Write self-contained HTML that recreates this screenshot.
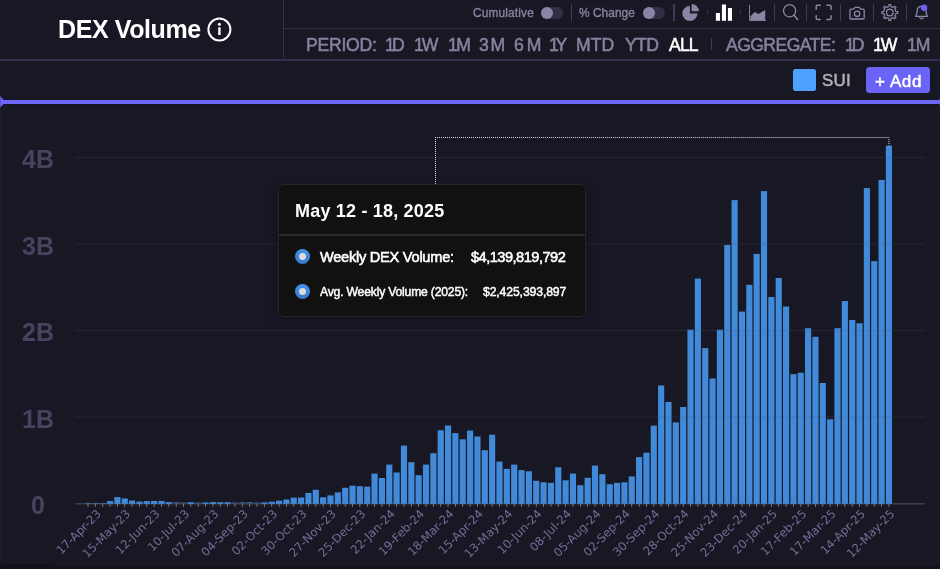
<!DOCTYPE html>
<html><head><meta charset="utf-8"><title>DEX Volume</title>
<style>
html,body{margin:0;padding:0}
body{width:940px;height:569px;background:#12121b;position:relative;overflow:hidden;font-family:"Liberation Sans",sans-serif}
.panel{position:absolute;left:0;top:0;width:940px;height:565px;background:#181825;border-radius:0 0 0 6px}
.edge{position:absolute;left:0;top:104px;width:1px;height:458px;background:#1c1c2a}
.t{position:absolute;white-space:nowrap;line-height:1;will-change:transform}
.hl{position:absolute;background:#312f49}
.sep{position:absolute;width:1.3px;background:#3d3b57}
.chart{position:absolute;left:0;top:0;will-change:transform}
.tog{position:absolute;height:12.1px;width:21.7px;border-radius:6.1px;background:#302f47}
.tog i{position:absolute;left:0;top:0;width:12.1px;height:12.1px;border-radius:50%;background:#8886a4}
.tip{position:absolute;left:278px;top:184px;width:308px;height:132.6px;background:#111111;border-radius:6px;box-sizing:border-box;border:1px solid #262626;box-shadow:0 2px 8px rgba(0,0,0,.35)}
.tipsep{position:absolute;left:279px;top:234.4px;width:306px;height:1.2px;background:#2a2a2a}
.dot{position:absolute;width:15.2px;height:15.2px;border-radius:50%;background:linear-gradient(#4596ec,#3578c8)}
.dot i{position:absolute;left:4.1px;top:4.2px;width:7px;height:7px;border-radius:50%;background:#dcdcdc}
</style></head><body>
<div class="panel" style="width:60px;height:564px"></div><div class="panel" style="left:52px;width:888px;height:566px;border-radius:0"></div>
<div class="edge"></div>
<!-- header lines -->
<div class="hl" style="left:0;top:59.2px;width:940px;height:1.5px"></div>
<div class="hl" style="left:283px;top:0;width:1.3px;height:60px"></div>
<div class="hl" style="left:283px;top:27.5px;width:657px;height:1.3px"></div>
<!-- purple slider -->
<div style="position:absolute;left:0;top:99.8px;width:940px;height:4.05px;background:#6b65f8;box-shadow:0 0 0 0.55px rgba(10,10,16,.6)"></div>
<svg class="chart" width="940" height="569" viewBox="0 0 940 569"><path d="M0 96.2 L0.9 96.9 L3.9 99.9 V103.8 L0.9 106.8 L0 107.5 Z" fill="#6b65f8"/><rect x="0" y="96.6" width="0.9" height="10.6" fill="#5752c4"/><path d="M940 98.7 L938.6 100 V103.7 L940 105 Z" fill="#6b65f8"/></svg>
<svg class="chart" width="940" height="569" viewBox="0 0 940 569">
<rect x="75" y="157.00" width="850" height="1.0" fill="#272639"/>
<rect x="75" y="243.50" width="850" height="1.0" fill="#272639"/>
<rect x="75" y="330.00" width="850" height="1.0" fill="#272639"/>
<rect x="75" y="416.50" width="850" height="1.0" fill="#272639"/>
<rect x="75.3" y="503.15" width="849.6" height="1.3" fill="#45444c"/>
<rect x="84.92" y="502.95" width="6.15" height="0.55" fill="#4189d9"/>
<rect x="92.27" y="502.95" width="6.15" height="0.55" fill="#4189d9"/>
<rect x="99.62" y="502.95" width="6.15" height="0.55" fill="#4189d9"/>
<rect x="106.97" y="501.10" width="6.15" height="2.80" fill="#4189d9"/>
<rect x="114.32" y="497.10" width="6.15" height="6.80" fill="#4189d9"/>
<rect x="121.67" y="498.50" width="6.15" height="5.40" fill="#4189d9"/>
<rect x="129.01" y="500.50" width="6.15" height="3.40" fill="#4189d9"/>
<rect x="136.36" y="501.60" width="6.15" height="2.30" fill="#4189d9"/>
<rect x="143.71" y="501.10" width="6.15" height="2.80" fill="#4189d9"/>
<rect x="151.06" y="500.90" width="6.15" height="3.00" fill="#4189d9"/>
<rect x="158.41" y="500.90" width="6.15" height="3.00" fill="#4189d9"/>
<rect x="165.75" y="502.10" width="6.15" height="1.80" fill="#4189d9"/>
<rect x="173.10" y="502.45" width="6.15" height="0.75" fill="#4189d9"/>
<rect x="180.45" y="502.65" width="6.15" height="0.55" fill="#4189d9"/>
<rect x="187.80" y="502.20" width="6.15" height="1.70" fill="#4189d9"/>
<rect x="195.15" y="502.65" width="6.15" height="0.55" fill="#4189d9"/>
<rect x="202.49" y="502.40" width="6.15" height="1.50" fill="#4189d9"/>
<rect x="209.84" y="502.10" width="6.15" height="1.80" fill="#4189d9"/>
<rect x="217.19" y="502.20" width="6.15" height="1.70" fill="#4189d9"/>
<rect x="224.54" y="502.20" width="6.15" height="1.70" fill="#4189d9"/>
<rect x="231.89" y="502.65" width="6.15" height="0.55" fill="#4189d9"/>
<rect x="239.23" y="502.45" width="6.15" height="0.75" fill="#4189d9"/>
<rect x="246.58" y="502.35" width="6.15" height="0.85" fill="#4189d9"/>
<rect x="253.93" y="502.65" width="6.15" height="0.55" fill="#4189d9"/>
<rect x="261.28" y="502.40" width="6.15" height="1.50" fill="#4189d9"/>
<rect x="268.62" y="501.70" width="6.15" height="2.20" fill="#4189d9"/>
<rect x="275.97" y="500.70" width="6.15" height="3.20" fill="#4189d9"/>
<rect x="283.32" y="499.50" width="6.15" height="4.40" fill="#4189d9"/>
<rect x="290.67" y="497.60" width="6.15" height="6.30" fill="#4189d9"/>
<rect x="298.02" y="497.50" width="6.15" height="6.40" fill="#4189d9"/>
<rect x="305.37" y="492.90" width="6.15" height="11.00" fill="#4189d9"/>
<rect x="312.71" y="489.80" width="6.15" height="14.10" fill="#4189d9"/>
<rect x="320.06" y="497.30" width="6.15" height="6.60" fill="#4189d9"/>
<rect x="327.41" y="495.40" width="6.15" height="8.50" fill="#4189d9"/>
<rect x="334.76" y="492.40" width="6.15" height="11.50" fill="#4189d9"/>
<rect x="342.11" y="487.80" width="6.15" height="16.10" fill="#4189d9"/>
<rect x="349.45" y="485.70" width="6.15" height="18.20" fill="#4189d9"/>
<rect x="356.80" y="486.20" width="6.15" height="17.70" fill="#4189d9"/>
<rect x="364.15" y="486.70" width="6.15" height="17.20" fill="#4189d9"/>
<rect x="371.50" y="473.60" width="6.15" height="30.30" fill="#4189d9"/>
<rect x="378.85" y="478.00" width="6.15" height="25.90" fill="#4189d9"/>
<rect x="386.19" y="464.60" width="6.15" height="39.30" fill="#4189d9"/>
<rect x="393.54" y="472.50" width="6.15" height="31.40" fill="#4189d9"/>
<rect x="400.89" y="445.60" width="6.15" height="58.30" fill="#4189d9"/>
<rect x="408.24" y="462.20" width="6.15" height="41.70" fill="#4189d9"/>
<rect x="415.58" y="475.20" width="6.15" height="28.70" fill="#4189d9"/>
<rect x="422.93" y="464.60" width="6.15" height="39.30" fill="#4189d9"/>
<rect x="430.28" y="453.20" width="6.15" height="50.70" fill="#4189d9"/>
<rect x="437.63" y="430.20" width="6.15" height="73.70" fill="#4189d9"/>
<rect x="444.98" y="425.50" width="6.15" height="78.40" fill="#4189d9"/>
<rect x="452.32" y="433.10" width="6.15" height="70.80" fill="#4189d9"/>
<rect x="459.67" y="439.30" width="6.15" height="64.60" fill="#4189d9"/>
<rect x="467.02" y="430.60" width="6.15" height="73.30" fill="#4189d9"/>
<rect x="474.37" y="436.50" width="6.15" height="67.40" fill="#4189d9"/>
<rect x="481.72" y="450.20" width="6.15" height="53.70" fill="#4189d9"/>
<rect x="489.06" y="434.70" width="6.15" height="69.20" fill="#4189d9"/>
<rect x="496.41" y="461.60" width="6.15" height="42.30" fill="#4189d9"/>
<rect x="503.76" y="468.90" width="6.15" height="35.00" fill="#4189d9"/>
<rect x="511.11" y="464.60" width="6.15" height="39.30" fill="#4189d9"/>
<rect x="518.46" y="470.10" width="6.15" height="33.80" fill="#4189d9"/>
<rect x="525.80" y="471.30" width="6.15" height="32.60" fill="#4189d9"/>
<rect x="533.15" y="480.80" width="6.15" height="23.10" fill="#4189d9"/>
<rect x="540.50" y="482.30" width="6.15" height="21.60" fill="#4189d9"/>
<rect x="547.85" y="482.80" width="6.15" height="21.10" fill="#4189d9"/>
<rect x="555.20" y="467.20" width="6.15" height="36.70" fill="#4189d9"/>
<rect x="562.54" y="480.30" width="6.15" height="23.60" fill="#4189d9"/>
<rect x="569.89" y="473.60" width="6.15" height="30.30" fill="#4189d9"/>
<rect x="577.24" y="485.20" width="6.15" height="18.70" fill="#4189d9"/>
<rect x="584.59" y="477.70" width="6.15" height="26.20" fill="#4189d9"/>
<rect x="591.94" y="465.60" width="6.15" height="38.30" fill="#4189d9"/>
<rect x="599.28" y="474.20" width="6.15" height="29.70" fill="#4189d9"/>
<rect x="606.63" y="484.20" width="6.15" height="19.70" fill="#4189d9"/>
<rect x="613.98" y="482.80" width="6.15" height="21.10" fill="#4189d9"/>
<rect x="621.33" y="482.30" width="6.15" height="21.60" fill="#4189d9"/>
<rect x="628.68" y="476.40" width="6.15" height="27.50" fill="#4189d9"/>
<rect x="636.02" y="457.10" width="6.15" height="46.80" fill="#4189d9"/>
<rect x="643.37" y="452.70" width="6.15" height="51.20" fill="#4189d9"/>
<rect x="650.72" y="425.60" width="6.15" height="78.30" fill="#4189d9"/>
<rect x="658.07" y="385.40" width="6.15" height="118.50" fill="#4189d9"/>
<rect x="665.42" y="402.00" width="6.15" height="101.90" fill="#4189d9"/>
<rect x="672.76" y="422.40" width="6.15" height="81.50" fill="#4189d9"/>
<rect x="680.11" y="407.00" width="6.15" height="96.90" fill="#4189d9"/>
<rect x="687.46" y="329.70" width="6.15" height="174.20" fill="#4189d9"/>
<rect x="694.81" y="278.60" width="6.15" height="225.30" fill="#4189d9"/>
<rect x="702.16" y="348.10" width="6.15" height="155.80" fill="#4189d9"/>
<rect x="709.50" y="378.50" width="6.15" height="125.40" fill="#4189d9"/>
<rect x="716.85" y="329.70" width="6.15" height="174.20" fill="#4189d9"/>
<rect x="724.20" y="245.00" width="6.15" height="258.90" fill="#4189d9"/>
<rect x="731.55" y="200.10" width="6.15" height="303.80" fill="#4189d9"/>
<rect x="738.90" y="311.60" width="6.15" height="192.30" fill="#4189d9"/>
<rect x="746.24" y="284.80" width="6.15" height="219.10" fill="#4189d9"/>
<rect x="753.59" y="253.90" width="6.15" height="250.00" fill="#4189d9"/>
<rect x="760.94" y="191.10" width="6.15" height="312.80" fill="#4189d9"/>
<rect x="768.29" y="297.00" width="6.15" height="206.90" fill="#4189d9"/>
<rect x="775.64" y="278.00" width="6.15" height="225.90" fill="#4189d9"/>
<rect x="782.98" y="306.50" width="6.15" height="197.40" fill="#4189d9"/>
<rect x="790.33" y="374.10" width="6.15" height="129.80" fill="#4189d9"/>
<rect x="797.68" y="372.80" width="6.15" height="131.10" fill="#4189d9"/>
<rect x="805.03" y="328.20" width="6.15" height="175.70" fill="#4189d9"/>
<rect x="812.38" y="336.80" width="6.15" height="167.10" fill="#4189d9"/>
<rect x="819.72" y="383.00" width="6.15" height="120.90" fill="#4189d9"/>
<rect x="827.07" y="419.30" width="6.15" height="84.60" fill="#4189d9"/>
<rect x="834.42" y="328.20" width="6.15" height="175.70" fill="#4189d9"/>
<rect x="841.77" y="301.10" width="6.15" height="202.80" fill="#4189d9"/>
<rect x="849.12" y="320.00" width="6.15" height="183.90" fill="#4189d9"/>
<rect x="856.46" y="323.30" width="6.15" height="180.60" fill="#4189d9"/>
<rect x="863.81" y="188.10" width="6.15" height="315.80" fill="#4189d9"/>
<rect x="871.16" y="261.10" width="6.15" height="242.80" fill="#4189d9"/>
<rect x="878.51" y="179.90" width="6.15" height="324.00" fill="#4189d9"/>
<rect x="885.86" y="145.70" width="6.15" height="358.20" fill="#4189d9"/>
<rect x="75.3" y="157.00" width="849.6" height="1.0" fill="#272639" opacity="0.12"/>
<rect x="75.3" y="243.50" width="849.6" height="1.0" fill="#272639" opacity="0.12"/>
<rect x="75.3" y="330.00" width="849.6" height="1.0" fill="#272639" opacity="0.12"/>
<rect x="75.3" y="416.50" width="849.6" height="1.0" fill="#272639" opacity="0.12"/>
<rect x="87.60" y="503.90" width="0.8" height="3.0" fill="#918e82"/>
<rect x="94.95" y="503.90" width="0.8" height="3.0" fill="#918e82"/>
<rect x="102.30" y="503.90" width="0.8" height="3.0" fill="#918e82"/>
<rect x="109.64" y="503.90" width="0.8" height="3.0" fill="#918e82"/>
<rect x="116.99" y="503.90" width="0.8" height="3.0" fill="#918e82"/>
<rect x="124.34" y="503.90" width="0.8" height="3.0" fill="#918e82"/>
<rect x="131.69" y="503.90" width="0.8" height="3.0" fill="#918e82"/>
<rect x="139.04" y="503.90" width="0.8" height="3.0" fill="#918e82"/>
<rect x="146.38" y="503.90" width="0.8" height="3.0" fill="#918e82"/>
<rect x="153.73" y="503.90" width="0.8" height="3.0" fill="#918e82"/>
<rect x="161.08" y="503.90" width="0.8" height="3.0" fill="#918e82"/>
<rect x="168.43" y="503.90" width="0.8" height="3.0" fill="#918e82"/>
<rect x="175.78" y="503.90" width="0.8" height="3.0" fill="#918e82"/>
<rect x="183.12" y="503.90" width="0.8" height="3.0" fill="#918e82"/>
<rect x="190.47" y="503.90" width="0.8" height="3.0" fill="#918e82"/>
<rect x="197.82" y="503.90" width="0.8" height="3.0" fill="#918e82"/>
<rect x="205.17" y="503.90" width="0.8" height="3.0" fill="#918e82"/>
<rect x="212.52" y="503.90" width="0.8" height="3.0" fill="#918e82"/>
<rect x="219.86" y="503.90" width="0.8" height="3.0" fill="#918e82"/>
<rect x="227.21" y="503.90" width="0.8" height="3.0" fill="#918e82"/>
<rect x="234.56" y="503.90" width="0.8" height="3.0" fill="#918e82"/>
<rect x="241.91" y="503.90" width="0.8" height="3.0" fill="#918e82"/>
<rect x="249.26" y="503.90" width="0.8" height="3.0" fill="#918e82"/>
<rect x="256.60" y="503.90" width="0.8" height="3.0" fill="#918e82"/>
<rect x="263.95" y="503.90" width="0.8" height="3.0" fill="#918e82"/>
<rect x="271.30" y="503.90" width="0.8" height="3.0" fill="#918e82"/>
<rect x="278.65" y="503.90" width="0.8" height="3.0" fill="#918e82"/>
<rect x="286.00" y="503.90" width="0.8" height="3.0" fill="#918e82"/>
<rect x="293.34" y="503.90" width="0.8" height="3.0" fill="#918e82"/>
<rect x="300.69" y="503.90" width="0.8" height="3.0" fill="#918e82"/>
<rect x="308.04" y="503.90" width="0.8" height="3.0" fill="#918e82"/>
<rect x="315.39" y="503.90" width="0.8" height="3.0" fill="#918e82"/>
<rect x="322.74" y="503.90" width="0.8" height="3.0" fill="#918e82"/>
<rect x="330.08" y="503.90" width="0.8" height="3.0" fill="#918e82"/>
<rect x="337.43" y="503.90" width="0.8" height="3.0" fill="#918e82"/>
<rect x="344.78" y="503.90" width="0.8" height="3.0" fill="#918e82"/>
<rect x="352.13" y="503.90" width="0.8" height="3.0" fill="#918e82"/>
<rect x="359.48" y="503.90" width="0.8" height="3.0" fill="#918e82"/>
<rect x="366.82" y="503.90" width="0.8" height="3.0" fill="#918e82"/>
<rect x="374.17" y="503.90" width="0.8" height="3.0" fill="#918e82"/>
<rect x="381.52" y="503.90" width="0.8" height="3.0" fill="#918e82"/>
<rect x="388.87" y="503.90" width="0.8" height="3.0" fill="#918e82"/>
<rect x="396.22" y="503.90" width="0.8" height="3.0" fill="#918e82"/>
<rect x="403.56" y="503.90" width="0.8" height="3.0" fill="#918e82"/>
<rect x="410.91" y="503.90" width="0.8" height="3.0" fill="#918e82"/>
<rect x="418.26" y="503.90" width="0.8" height="3.0" fill="#918e82"/>
<rect x="425.61" y="503.90" width="0.8" height="3.0" fill="#918e82"/>
<rect x="432.96" y="503.90" width="0.8" height="3.0" fill="#918e82"/>
<rect x="440.30" y="503.90" width="0.8" height="3.0" fill="#918e82"/>
<rect x="447.65" y="503.90" width="0.8" height="3.0" fill="#918e82"/>
<rect x="455.00" y="503.90" width="0.8" height="3.0" fill="#918e82"/>
<rect x="462.35" y="503.90" width="0.8" height="3.0" fill="#918e82"/>
<rect x="469.70" y="503.90" width="0.8" height="3.0" fill="#918e82"/>
<rect x="477.04" y="503.90" width="0.8" height="3.0" fill="#918e82"/>
<rect x="484.39" y="503.90" width="0.8" height="3.0" fill="#918e82"/>
<rect x="491.74" y="503.90" width="0.8" height="3.0" fill="#918e82"/>
<rect x="499.09" y="503.90" width="0.8" height="3.0" fill="#918e82"/>
<rect x="506.44" y="503.90" width="0.8" height="3.0" fill="#918e82"/>
<rect x="513.78" y="503.90" width="0.8" height="3.0" fill="#918e82"/>
<rect x="521.13" y="503.90" width="0.8" height="3.0" fill="#918e82"/>
<rect x="528.48" y="503.90" width="0.8" height="3.0" fill="#918e82"/>
<rect x="535.83" y="503.90" width="0.8" height="3.0" fill="#918e82"/>
<rect x="543.18" y="503.90" width="0.8" height="3.0" fill="#918e82"/>
<rect x="550.52" y="503.90" width="0.8" height="3.0" fill="#918e82"/>
<rect x="557.87" y="503.90" width="0.8" height="3.0" fill="#918e82"/>
<rect x="565.22" y="503.90" width="0.8" height="3.0" fill="#918e82"/>
<rect x="572.57" y="503.90" width="0.8" height="3.0" fill="#918e82"/>
<rect x="579.92" y="503.90" width="0.8" height="3.0" fill="#918e82"/>
<rect x="587.26" y="503.90" width="0.8" height="3.0" fill="#918e82"/>
<rect x="594.61" y="503.90" width="0.8" height="3.0" fill="#918e82"/>
<rect x="601.96" y="503.90" width="0.8" height="3.0" fill="#918e82"/>
<rect x="609.31" y="503.90" width="0.8" height="3.0" fill="#918e82"/>
<rect x="616.66" y="503.90" width="0.8" height="3.0" fill="#918e82"/>
<rect x="624.00" y="503.90" width="0.8" height="3.0" fill="#918e82"/>
<rect x="631.35" y="503.90" width="0.8" height="3.0" fill="#918e82"/>
<rect x="638.70" y="503.90" width="0.8" height="3.0" fill="#918e82"/>
<rect x="646.05" y="503.90" width="0.8" height="3.0" fill="#918e82"/>
<rect x="653.40" y="503.90" width="0.8" height="3.0" fill="#918e82"/>
<rect x="660.74" y="503.90" width="0.8" height="3.0" fill="#918e82"/>
<rect x="668.09" y="503.90" width="0.8" height="3.0" fill="#918e82"/>
<rect x="675.44" y="503.90" width="0.8" height="3.0" fill="#918e82"/>
<rect x="682.79" y="503.90" width="0.8" height="3.0" fill="#918e82"/>
<rect x="690.14" y="503.90" width="0.8" height="3.0" fill="#918e82"/>
<rect x="697.48" y="503.90" width="0.8" height="3.0" fill="#918e82"/>
<rect x="704.83" y="503.90" width="0.8" height="3.0" fill="#918e82"/>
<rect x="712.18" y="503.90" width="0.8" height="3.0" fill="#918e82"/>
<rect x="719.53" y="503.90" width="0.8" height="3.0" fill="#918e82"/>
<rect x="726.88" y="503.90" width="0.8" height="3.0" fill="#918e82"/>
<rect x="734.22" y="503.90" width="0.8" height="3.0" fill="#918e82"/>
<rect x="741.57" y="503.90" width="0.8" height="3.0" fill="#918e82"/>
<rect x="748.92" y="503.90" width="0.8" height="3.0" fill="#918e82"/>
<rect x="756.27" y="503.90" width="0.8" height="3.0" fill="#918e82"/>
<rect x="763.62" y="503.90" width="0.8" height="3.0" fill="#918e82"/>
<rect x="770.96" y="503.90" width="0.8" height="3.0" fill="#918e82"/>
<rect x="778.31" y="503.90" width="0.8" height="3.0" fill="#918e82"/>
<rect x="785.66" y="503.90" width="0.8" height="3.0" fill="#918e82"/>
<rect x="793.01" y="503.90" width="0.8" height="3.0" fill="#918e82"/>
<rect x="800.36" y="503.90" width="0.8" height="3.0" fill="#918e82"/>
<rect x="807.70" y="503.90" width="0.8" height="3.0" fill="#918e82"/>
<rect x="815.05" y="503.90" width="0.8" height="3.0" fill="#918e82"/>
<rect x="822.40" y="503.90" width="0.8" height="3.0" fill="#918e82"/>
<rect x="829.75" y="503.90" width="0.8" height="3.0" fill="#918e82"/>
<rect x="837.10" y="503.90" width="0.8" height="3.0" fill="#918e82"/>
<rect x="844.44" y="503.90" width="0.8" height="3.0" fill="#918e82"/>
<rect x="851.79" y="503.90" width="0.8" height="3.0" fill="#918e82"/>
<rect x="859.14" y="503.90" width="0.8" height="3.0" fill="#918e82"/>
<rect x="866.49" y="503.90" width="0.8" height="3.0" fill="#918e82"/>
<rect x="873.84" y="503.90" width="0.8" height="3.0" fill="#918e82"/>
<rect x="881.18" y="503.90" width="0.8" height="3.0" fill="#918e82"/>
<rect x="888.53" y="503.90" width="0.8" height="3.0" fill="#918e82"/>
<text x="38" y="168.40" text-anchor="middle" font-family="'Liberation Sans', sans-serif" font-weight="700" font-size="25" fill="#46435f">4B</text>
<text x="38" y="254.90" text-anchor="middle" font-family="'Liberation Sans', sans-serif" font-weight="700" font-size="25" fill="#46435f">3B</text>
<text x="38" y="341.40" text-anchor="middle" font-family="'Liberation Sans', sans-serif" font-weight="700" font-size="25" fill="#46435f">2B</text>
<text x="38" y="427.90" text-anchor="middle" font-family="'Liberation Sans', sans-serif" font-weight="700" font-size="25" fill="#46435f">1B</text>
<text x="38" y="514.40" text-anchor="middle" font-family="'Liberation Sans', sans-serif" font-weight="700" font-size="25" fill="#46435f">0</text>
<text x="101.75" y="514.50" transform="rotate(-45 101.75 514.50)" text-anchor="end" font-family="'DejaVu Sans', sans-serif" font-size="11.7" fill="#726e97">17-Apr-23</text>
<text x="131.14" y="514.50" transform="rotate(-45 131.14 514.50)" text-anchor="end" font-family="'DejaVu Sans', sans-serif" font-size="11.7" fill="#726e97">15-May-23</text>
<text x="160.53" y="514.50" transform="rotate(-45 160.53 514.50)" text-anchor="end" font-family="'DejaVu Sans', sans-serif" font-size="11.7" fill="#726e97">12-Jun-23</text>
<text x="189.92" y="514.50" transform="rotate(-45 189.92 514.50)" text-anchor="end" font-family="'DejaVu Sans', sans-serif" font-size="11.7" fill="#726e97">10-Jul-23</text>
<text x="219.32" y="514.50" transform="rotate(-45 219.32 514.50)" text-anchor="end" font-family="'DejaVu Sans', sans-serif" font-size="11.7" fill="#726e97">07-Aug-23</text>
<text x="248.71" y="514.50" transform="rotate(-45 248.71 514.50)" text-anchor="end" font-family="'DejaVu Sans', sans-serif" font-size="11.7" fill="#726e97">04-Sep-23</text>
<text x="278.10" y="514.50" transform="rotate(-45 278.10 514.50)" text-anchor="end" font-family="'DejaVu Sans', sans-serif" font-size="11.7" fill="#726e97">02-Oct-23</text>
<text x="307.49" y="514.50" transform="rotate(-45 307.49 514.50)" text-anchor="end" font-family="'DejaVu Sans', sans-serif" font-size="11.7" fill="#726e97">30-Oct-23</text>
<text x="336.88" y="514.50" transform="rotate(-45 336.88 514.50)" text-anchor="end" font-family="'DejaVu Sans', sans-serif" font-size="11.7" fill="#726e97">27-Nov-23</text>
<text x="366.28" y="514.50" transform="rotate(-45 366.28 514.50)" text-anchor="end" font-family="'DejaVu Sans', sans-serif" font-size="11.7" fill="#726e97">25-Dec-23</text>
<text x="395.67" y="514.50" transform="rotate(-45 395.67 514.50)" text-anchor="end" font-family="'DejaVu Sans', sans-serif" font-size="11.7" fill="#726e97">22-Jan-24</text>
<text x="425.06" y="514.50" transform="rotate(-45 425.06 514.50)" text-anchor="end" font-family="'DejaVu Sans', sans-serif" font-size="11.7" fill="#726e97">19-Feb-24</text>
<text x="454.45" y="514.50" transform="rotate(-45 454.45 514.50)" text-anchor="end" font-family="'DejaVu Sans', sans-serif" font-size="11.7" fill="#726e97">18-Mar-24</text>
<text x="483.84" y="514.50" transform="rotate(-45 483.84 514.50)" text-anchor="end" font-family="'DejaVu Sans', sans-serif" font-size="11.7" fill="#726e97">15-Apr-24</text>
<text x="513.24" y="514.50" transform="rotate(-45 513.24 514.50)" text-anchor="end" font-family="'DejaVu Sans', sans-serif" font-size="11.7" fill="#726e97">13-May-24</text>
<text x="542.63" y="514.50" transform="rotate(-45 542.63 514.50)" text-anchor="end" font-family="'DejaVu Sans', sans-serif" font-size="11.7" fill="#726e97">10-Jun-24</text>
<text x="572.02" y="514.50" transform="rotate(-45 572.02 514.50)" text-anchor="end" font-family="'DejaVu Sans', sans-serif" font-size="11.7" fill="#726e97">08-Jul-24</text>
<text x="601.41" y="514.50" transform="rotate(-45 601.41 514.50)" text-anchor="end" font-family="'DejaVu Sans', sans-serif" font-size="11.7" fill="#726e97">05-Aug-24</text>
<text x="630.80" y="514.50" transform="rotate(-45 630.80 514.50)" text-anchor="end" font-family="'DejaVu Sans', sans-serif" font-size="11.7" fill="#726e97">02-Sep-24</text>
<text x="660.20" y="514.50" transform="rotate(-45 660.20 514.50)" text-anchor="end" font-family="'DejaVu Sans', sans-serif" font-size="11.7" fill="#726e97">30-Sep-24</text>
<text x="689.59" y="514.50" transform="rotate(-45 689.59 514.50)" text-anchor="end" font-family="'DejaVu Sans', sans-serif" font-size="11.7" fill="#726e97">28-Oct-24</text>
<text x="718.98" y="514.50" transform="rotate(-45 718.98 514.50)" text-anchor="end" font-family="'DejaVu Sans', sans-serif" font-size="11.7" fill="#726e97">25-Nov-24</text>
<text x="748.37" y="514.50" transform="rotate(-45 748.37 514.50)" text-anchor="end" font-family="'DejaVu Sans', sans-serif" font-size="11.7" fill="#726e97">23-Dec-24</text>
<text x="777.76" y="514.50" transform="rotate(-45 777.76 514.50)" text-anchor="end" font-family="'DejaVu Sans', sans-serif" font-size="11.7" fill="#726e97">20-Jan-25</text>
<text x="807.16" y="514.50" transform="rotate(-45 807.16 514.50)" text-anchor="end" font-family="'DejaVu Sans', sans-serif" font-size="11.7" fill="#726e97">17-Feb-25</text>
<text x="836.55" y="514.50" transform="rotate(-45 836.55 514.50)" text-anchor="end" font-family="'DejaVu Sans', sans-serif" font-size="11.7" fill="#726e97">17-Mar-25</text>
<text x="865.94" y="514.50" transform="rotate(-45 865.94 514.50)" text-anchor="end" font-family="'DejaVu Sans', sans-serif" font-size="11.7" fill="#726e97">14-Apr-25</text>
<text x="895.33" y="514.50" transform="rotate(-45 895.33 514.50)" text-anchor="end" font-family="'DejaVu Sans', sans-serif" font-size="11.7" fill="#726e97">12-May-25</text>
<path d="M435 137.5 H889.6" fill="none" stroke="#e4e4e8" stroke-width="1" stroke-dasharray="1 1.0022"/>
<path d="M435.5 139 V184" fill="none" stroke="#dcdce0" stroke-width="1" stroke-dasharray="1 1"/>
<path d="M889 139 V145.6" fill="none" stroke="#dcdce0" stroke-width="1" stroke-dasharray="1 1"/>
</svg>
<!-- header controls -->
<div class="tog" style="left:541.2px;top:6.7px"><i></i></div>
<div class="tog" style="left:643.4px;top:6.7px"><i></i></div>
<div class="sep" style="left:571px;top:4.2px;height:16.7px"></div>
<div class="sep" style="left:673.3px;top:4.2px;height:16.7px"></div>
<div class="sep" style="left:706.7px;top:11.2px;height:2.6px"></div>
<div class="sep" style="left:739.8px;top:11.2px;height:2.6px"></div>
<div class="sep" style="left:774px;top:4.2px;height:16.7px"></div>
<div class="sep" style="left:806.2px;top:4.2px;height:16.7px"></div>
<div class="sep" style="left:839.7px;top:4.2px;height:16.7px"></div>
<div class="sep" style="left:872.8px;top:4.2px;height:16.7px"></div>
<div class="sep" style="left:905.8px;top:4.2px;height:16.7px"></div>
<div class="sep" style="left:711px;top:37.8px;height:12.6px"></div>
<svg class="chart" width="940" height="62" viewBox="0 0 940 62">
<!-- info icon -->
<circle cx="219.4" cy="29.5" r="11" fill="none" stroke="#fff" stroke-width="2"/>
<circle cx="219.4" cy="24.3" r="1.5" fill="#fff"/>
<rect x="218.2" y="27.3" width="2.4" height="7.7" fill="#fff"/>
<!-- pie icon -->
<path d="M689.9 5.9 A7.6 7.6 0 1 0 697.5 13.5 L689.9 13.5 Z" fill="#8986a3"/>
<path d="M691.6 4 A7.3 7.3 0 0 1 698.9 11.3 L691.6 11.3 Z" fill="#8986a3"/>
<!-- bar icon -->
<rect x="715.9" y="13" width="4.1" height="7.8" fill="#fff"/>
<rect x="721.9" y="4.5" width="4.1" height="16.3" fill="#fff"/>
<rect x="727.9" y="8" width="4.1" height="12.8" fill="#fff"/>
<!-- area icon -->
<path d="M749.5 4.8 V20.5 H766" fill="none" stroke="#8986a3" stroke-width="0.9"/>
<path d="M750.3 16.4 L754.7 12.1 L758.4 13.9 L765.2 10 V20.3 H750.3 Z" fill="#8986a3"/>
<!-- search icon -->
<circle cx="789.6" cy="10.8" r="6.1" fill="none" stroke="#8986a3" stroke-width="1.3"/>
<path d="M794.1 15.3 L797.7 19.5" stroke="#8986a3" stroke-width="1.5" stroke-linecap="round"/>
<!-- fullscreen icon -->
<path d="M816.2 9.2 V6.6 Q816.2 5.3 817.5 5.3 H820.3 M827 5.3 H829.8 Q831.1 5.3 831.1 6.6 V9.2 M831.1 15.7 V18.3 Q831.1 19.6 829.8 19.6 H827 M820.3 19.6 H817.5 Q816.2 19.6 816.2 18.3 V15.7" fill="none" stroke="#8986a3" stroke-width="1.5" stroke-linecap="round"/>
<!-- camera icon -->
<path d="M850 10.2 Q850 9.2 851 9.2 H853.6 L855 7.4 H859.2 L860.6 9.2 H863.2 Q864.2 9.2 864.2 10.2 V18 Q864.2 19 863.2 19 H851 Q850 19 850 18 Z" fill="none" stroke="#8986a3" stroke-width="1.3" stroke-linejoin="round"/>
<circle cx="857.1" cy="13.8" r="2.7" fill="none" stroke="#8986a3" stroke-width="1.3"/>
<!-- gear icon -->
<g transform="translate(889.8 12.5)" fill="none" stroke="#8986a3" stroke-width="1.2" stroke-linejoin="round">
<path d="M5.68 -1.94 L5.88 -1.18 L7.84 -0.95 L7.84 0.95 L5.88 1.18 L5.68 1.94 L5.39 2.64 L4.99 3.33 L6.22 4.87 L4.87 6.22 L3.33 4.99 L2.64 5.39 L1.94 5.68 L1.18 5.88 L0.95 7.84 L-0.95 7.84 L-1.18 5.88 L-1.94 5.68 L-2.64 5.39 L-3.33 4.99 L-4.87 6.22 L-6.22 4.87 L-4.99 3.33 L-5.39 2.64 L-5.68 1.94 L-5.88 1.18 L-7.84 0.95 L-7.84 -0.95 L-5.88 -1.18 L-5.68 -1.94 L-5.39 -2.64 L-4.99 -3.33 L-6.22 -4.87 L-4.87 -6.22 L-3.33 -4.99 L-2.64 -5.39 L-1.94 -5.68 L-1.18 -5.88 L-0.95 -7.84 L0.95 -7.84 L1.18 -5.88 L1.94 -5.68 L2.64 -5.39 L3.33 -4.99 L4.87 -6.22 L6.22 -4.87 L4.99 -3.33 L5.39 -2.64 Z"/>
<circle r="3.3"/>
</g>
<!-- bell icon -->
<path d="M921.6 6.4 C918.6 6.4 917.2 8.6 917.2 11 C917.2 14.2 916.2 15.2 915.6 16.4 H927.6 C927 15.2 926 14.2 926 11 C926 8.6 924.6 6.4 921.6 6.4 Z" fill="none" stroke="#8986a3" stroke-width="1.3" stroke-linejoin="round"/>
<path d="M919.8 17.6 Q921.6 20 923.4 17.6" fill="none" stroke="#8986a3" stroke-width="1.3" stroke-linecap="round"/>
<circle cx="924.1" cy="7.8" r="3.2" fill="#6a63f3"/>
</svg>
<!-- legend -->
<div style="position:absolute;left:793.3px;top:68.6px;width:22.8px;height:22.6px;border-radius:2.5px;background:#4da2ff"></div>
<div style="position:absolute;left:865.9px;top:66.9px;width:64px;height:26.4px;border-radius:3.5px;background:#6a63f8"></div>
<!-- tooltip -->
<div class="tip"></div>
<div class="tipsep"></div>
<div class="dot" style="left:294.9px;top:248.9px"><i></i></div>
<div class="dot" style="left:294.9px;top:284.3px"><i></i></div>
<span class="t" style="left:57.98px;top:16.64px;font-size:25.0px;letter-spacing:-0.406px;color:#ffffff;font-weight:700;">DEX Volume</span>
<span class="t" style="left:472.50px;top:7.73px;font-size:11.9px;letter-spacing:0.148px;color:#86839f;-webkit-text-stroke:0.35px #86839f;">Cumulative</span>
<span class="t" style="left:579.48px;top:7.73px;font-size:11.9px;letter-spacing:0.040px;color:#86839f;-webkit-text-stroke:0.35px #86839f;">% Change</span>
<span class="t" style="left:305.89px;top:36.50px;font-size:17.6px;letter-spacing:-0.241px;color:#86839f;-webkit-text-stroke:0.5px #86839f;">PERIOD:</span>
<span class="t" style="left:385.38px;top:36.50px;font-size:17.6px;letter-spacing:-2.728px;color:#86839f;-webkit-text-stroke:0.5px #86839f;">1D</span>
<span class="t" style="left:413.98px;top:36.50px;font-size:17.6px;letter-spacing:-1.992px;color:#86839f;-webkit-text-stroke:0.5px #86839f;">1W</span>
<span class="t" style="left:447.68px;top:36.50px;font-size:17.6px;letter-spacing:-1.448px;color:#86839f;-webkit-text-stroke:0.5px #86839f;">1M</span>
<span class="t" style="left:479.20px;top:36.50px;font-size:17.6px;letter-spacing:1.736px;color:#86839f;-webkit-text-stroke:0.5px #86839f;">3M</span>
<span class="t" style="left:513.72px;top:36.50px;font-size:17.6px;letter-spacing:2.912px;color:#86839f;-webkit-text-stroke:0.5px #86839f;">6M</span>
<span class="t" style="left:548.98px;top:36.50px;font-size:17.6px;letter-spacing:-3.200px;color:#86839f;-webkit-text-stroke:0.5px #86839f;">1Y</span>
<span class="t" style="left:576.49px;top:36.50px;font-size:17.6px;letter-spacing:0.048px;color:#86839f;-webkit-text-stroke:0.5px #86839f;">MTD</span>
<span class="t" style="left:624.66px;top:36.50px;font-size:17.6px;letter-spacing:-0.634px;color:#86839f;-webkit-text-stroke:0.5px #86839f;">YTD</span>
<span class="t" style="left:668.50px;top:36.50px;font-size:17.6px;letter-spacing:-0.850px;color:#ffffff;-webkit-text-stroke:0.5px #ffffff;">ALL</span>
<span class="t" style="left:726.30px;top:36.50px;font-size:17.6px;letter-spacing:-0.581px;color:#86839f;-webkit-text-stroke:0.5px #86839f;">AGGREGATE:</span>
<span class="t" style="left:844.68px;top:36.50px;font-size:17.6px;letter-spacing:-2.928px;color:#86839f;-webkit-text-stroke:0.5px #86839f;">1D</span>
<span class="t" style="left:873.08px;top:36.50px;font-size:17.6px;letter-spacing:-2.092px;color:#ffffff;-webkit-text-stroke:0.5px #ffffff;">1W</span>
<span class="t" style="left:906.68px;top:36.50px;font-size:17.6px;letter-spacing:-0.948px;color:#86839f;-webkit-text-stroke:0.5px #86839f;">1M</span>
<span class="t" style="left:822.14px;top:72.99px;font-size:16.9px;letter-spacing:0.222px;color:#b3b0b3;-webkit-text-stroke:0.5px #b3b0b3;">SUI</span>
<span class="t" style="left:875.05px;top:72.81px;font-size:17.0px;letter-spacing:0.602px;color:#ffffff;-webkit-text-stroke:0.5px #ffffff;">+ Add</span>
<span class="t" style="left:294.63px;top:201.76px;font-size:18.0px;letter-spacing:0.197px;color:#ffffff;font-weight:700;">May 12 - 18, 2025</span>
<span class="t" style="left:320.13px;top:249.64px;font-size:14.6px;letter-spacing:-0.258px;color:#ffffff;-webkit-text-stroke:0.55px #ffffff;">Weekly DEX Volume:</span>
<span class="t" style="left:471.05px;top:249.64px;font-size:14.6px;letter-spacing:-0.515px;color:#ffffff;-webkit-text-stroke:0.55px #ffffff;">$4,139,819,792</span>
<span class="t" style="left:319.90px;top:286.17px;font-size:12.2px;letter-spacing:-0.203px;color:#ffffff;-webkit-text-stroke:0.45px #ffffff;">Avg. Weekly Volume (2025):</span>
<span class="t" style="left:482.58px;top:286.17px;font-size:12.2px;letter-spacing:-0.112px;color:#ffffff;-webkit-text-stroke:0.45px #ffffff;">$2,425,393,897</span>
</body></html>
